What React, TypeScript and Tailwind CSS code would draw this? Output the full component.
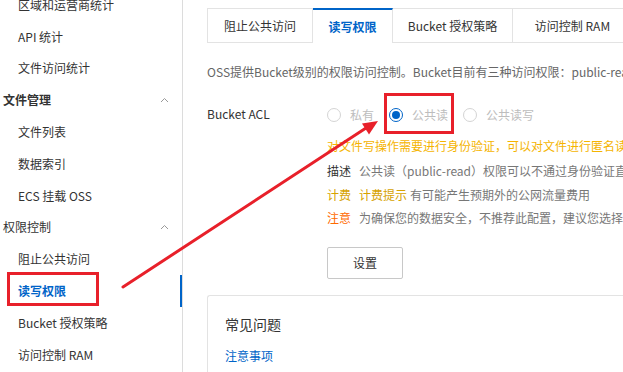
import React from "react";

const font = { fontFamily: '"Noto Sans CJK SC", "Liberation Sans", sans-serif' };

type NavItem = { label: string; header?: boolean; bold?: boolean; active?: boolean };

const nav: NavItem[] = [
  { label: "区域和运营商统计" },
  { label: "API 统计" },
  { label: "文件访问统计" },
  { label: "文件管理", header: true, bold: true },
  { label: "文件列表" },
  { label: "数据索引" },
  { label: "ECS 挂载 OSS" },
  { label: "权限控制", header: true },
  { label: "阻止公共访问" },
  { label: "读写权限", active: true },
  { label: "Bucket 授权策略" },
  { label: "访问控制 RAM" },
];

const Chevron = () => (
  <svg width="9" height="6" viewBox="0 0 9 6" className="mr-[13px]">
    <path d="M1 5 L4.5 1.5 L8 5" fill="none" stroke="#999" strokeWidth="1" />
  </svg>
);

const Radio = ({ checked, label }: { checked?: boolean; label: string }) => (
  <div className="flex items-center mr-[15px]">
    <div
      className={
        "w-[14px] h-[14px] rounded-full border flex items-center justify-center " +
        (checked ? "border-[#0064c8]" : "border-[#d4d4d4]")
      }
    >
      {checked && <div className="w-[8px] h-[8px] rounded-full bg-[#0064c8]" />}
    </div>
    <span className="ml-[9px] text-[12px] text-[#bdbdbd]">{label}</span>
  </div>
);

const tabs = [
  { label: "阻止公共访问", w: "w-[106px]" },
  { label: "读写权限", w: "w-[80px]", active: true },
  { label: "Bucket 授权策略", w: "w-[120px]" },
  { label: "访问控制 RAM", w: "w-[120px]" },
];

export default function App() {
  return (
    <div className="relative w-[623px] h-[372px] overflow-hidden bg-white flex" style={font}>
      {/* sidebar */}
      <div className="w-[183px] shrink-0 border-r border-[#dcdcdc] h-full">
        <div className="mt-[-11px]">
          {nav.map((n, i) => (
            <div key={i} className="relative h-[31.8px] flex items-center justify-between">
              <span
                className={
                  "text-[12px] " +
                  (n.header ? "pl-[3px] " : "pl-[18px] ") +
                  (n.bold ? "font-bold text-[#333] " : "") +
                  (n.active ? "text-[#0064c8] font-semibold" : "text-[#333]")
                }
              >
                {n.label}
              </span>
              {n.header && <Chevron />}
              {n.active && <span className="absolute right-[0px] top-0 h-full w-[2px] bg-[#0064c8]" />}
            </div>
          ))}
        </div>
      </div>

      {/* main */}
      <div className="flex-1 pl-[24px] text-[12px] text-[#333]">
        <div className="flex mt-[8px] h-[35px]">
          {tabs.map((t, i) => (
            <div
              key={i}
              className={
                t.w +
                " shrink-0 flex items-center justify-center text-[12px] " +
                (t.active
                  ? "border-t-2 border-t-[#0064c8] border-r border-r-[#e3e3e3] text-[#0064c8] font-semibold"
                  : "border-t border-r border-b border-[#e3e3e3] text-[#333]") +
                (i === 0 ? " border-l" : "")
              }
            >
              {t.label}
            </div>
          ))}
        </div>

        <p className="mt-[20px] whitespace-nowrap text-[#666] leading-[18px]">
          OSS提供Bucket级别的权限访问控制。Bucket目前有三种访问权限：public-read-write，public-read和private
        </p>

        <div className="flex mt-[22px]">
          <div className="w-[120px] shrink-0 text-[12px] text-[#333] leading-[18px] pt-[2px]">Bucket ACL</div>
          <div className="flex flex-col">
            <div className="flex items-center h-[24px]">
              <Radio label="私有" />
              <Radio checked label="公共读" />
              <Radio label="公共读写" />
            </div>
            <div className="mt-[10px] whitespace-nowrap text-[#f5b400] leading-[18px]">
              对文件写操作需要进行身份验证，可以对文件进行匿名读。
            </div>
            <div className="mt-[7px] whitespace-nowrap leading-[18px] flex">
              <span className="text-[#333] mr-[8px]">描述</span>
              <span className="text-[#777]">公共读（public-read）权限可以不通过身份验证直接读取您 Bucket 中的数据</span>
            </div>
            <div className="mt-[6px] whitespace-nowrap leading-[18px] flex">
              <span className="text-[#d6a200] mr-[8px]">计费</span>
              <span className="text-[#d6a200]">计费提示</span>
              <span className="text-[#777] ml-[3px]">有可能产生预期外的公网流量费用</span>
            </div>
            <div className="mt-[5px] whitespace-nowrap leading-[18px] flex">
              <span className="text-[#ff6a00] mr-[8px]">注意</span>
              <span className="text-[#777]">为确保您的数据安全，不推荐此配置，建议您选择私有</span>
            </div>
            <button className="mt-[20px] w-[76px] h-[32px] border border-[#c8c8c8] rounded-[2px] text-[12px] text-[#333] bg-white">
              设置
            </button>
          </div>
        </div>

        <div className="mt-[16px] border-l border-t border-[#e3e3e3] rounded-tl-[3px] w-[500px] h-[120px] pl-[17px]">
          <div className="mt-[18px] text-[14px] text-[#333] leading-[20px]">常见问题</div>
          <div className="mt-[13px] text-[12px] text-[#0064c8] leading-[18px]">注意事项</div>
        </div>
      </div>

      {/* annotations */}
      <div className="absolute left-[7px] top-[272px] w-[92px] h-[34px] border-[3px] border-[#e8202a]" />
      <div className="absolute left-[384px] top-[93px] w-[70px] h-[41px] border-[3px] border-[#e8202a]" />
      <svg className="absolute left-0 top-0 pointer-events-none" width="623" height="372">
        <line x1="123" y1="287" x2="366" y2="128" stroke="#e8202a" strokeWidth="3" strokeLinecap="round" />
        <polygon points="378,121 362,123.5 369,134.5" fill="#e8202a" />
      </svg>
    </div>
  );
}
